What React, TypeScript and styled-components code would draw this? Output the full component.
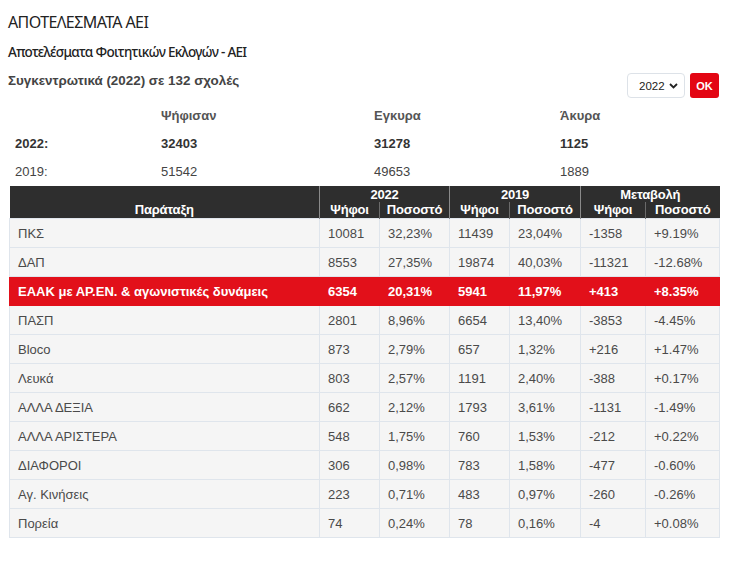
import React from "react";
import styled, { createGlobalStyle } from "styled-components";

const Global = createGlobalStyle`
  html, body { margin: 0; padding: 0; background: #fff; }
  body { font-family: "Liberation Sans", Arial, sans-serif; color: #333; }
`;

const Page = styled.div`
  width: 711px;
  padding: 12px 15px 20px 8px;
`;

const Title = styled.h1`
  margin: 0;
  font-family: "Noto Sans", "Open Sans", sans-serif;
  font-weight: 400;
  font-size: 16px;
  line-height: 20px;
  letter-spacing: -0.6px;
  color: #222;
`;

const SubTitle = styled.h2`
  margin: 10px 0 0;
  font-family: "Noto Sans", "Open Sans", sans-serif;
  font-weight: 500;
  font-size: 13.5px;
  line-height: 20px;
  letter-spacing: -0.7px;
  color: #222;
`;

const FilterRow = styled.div`
  display: flex;
  justify-content: space-between;
  align-items: flex-start;
  margin-top: 6px;
`;

const Summary = styled.h3`
  margin: 4px 0 0;
  font-family: "Liberation Sans", Arial, sans-serif;
  font-weight: 700;
  font-size: 13.4px;
  line-height: 18px;
  color: #444;
`;

const Form = styled.div`
  display: flex;
  gap: 5px;
  margin-top: 5px;
`;

const Select = styled.div`
  width: 58px;
  height: 25px;
  box-sizing: border-box;
  border: 1px solid #dde2e8;
  border-radius: 4px;
  display: flex;
  align-items: center;
  justify-content: space-between;
  padding: 0 6px 0 11px;
  font-size: 11.5px;
  color: #222;
  background: #fff;
`;

const OkButton = styled.button`
  width: 29px;
  height: 25px;
  border: none;
  border-radius: 3px;
  background: #e30613;
  color: #fff;
  font-family: "Liberation Sans", Arial, sans-serif;
  font-weight: 700;
  font-size: 11px;
  padding: 0;
`;

const Totals = styled.div`
  display: grid;
  grid-template-columns: 146px 213px 186px 1fr;
  grid-auto-rows: 28px;
  margin: 3px 0 0 7px;
  align-items: center;
  font-size: 13px;
`;

const TCell = styled.div<{ $bold?: boolean; $head?: boolean }>`
  font-weight: ${(p) => (p.$bold || p.$head ? 700 : 400)};
  color: ${(p) => (p.$head ? "#555" : p.$bold ? "#333" : "#444")};
`;

const Table = styled.table`
  margin: 1px 0 0 1px;
  width: 710px;
  border-collapse: collapse;
  table-layout: fixed;
  font-size: 13px;
`;

const Head = styled.thead`
  background: #2e2e2e;
  color: #fff;
`;

const Th = styled.th<{ $sep?: boolean; $minor?: boolean; $top?: boolean }>`
  font-weight: 700;
  font-size: 13px;
  line-height: 15px;
  text-align: center;
  padding: ${(p) => (p.$top ? "1px 0 0" : "0 0 1px")};
  vertical-align: bottom;
  border-left: ${(p) => (p.$sep ? "1px solid #8a8a8a" : p.$minor ? "1px solid #6a6a6a" : "none")};
  letter-spacing: -0.2px;
`;

const Row = styled.tr<{ $hl?: boolean }>`
  height: 29px;
  background: ${(p) => (p.$hl ? "#e2101a" : "#f5f5f5")};
  color: ${(p) => (p.$hl ? "#fff" : "#4a4a4a")};
  font-weight: ${(p) => (p.$hl ? 700 : 400)};
`;

const Td = styled.td<{ $hl?: boolean }>`
  padding: 0 8px;
  border: 1px solid ${(p) => (p.$hl ? "#e2101a" : "#dfe5ec")};
  border-top-color: #dfe5ec;
  white-space: nowrap;
  overflow: hidden;
`;

const Chevron = () => (
  <svg width="9" height="6" viewBox="0 0 9 6">
    <path d="M1 1l3.5 3.5L8 1" fill="none" stroke="#222" strokeWidth="1.8" />
  </svg>
);

const rows: [string, string, string, string, string, string, string, boolean?][] = [
  ["ΠΚΣ", "10081", "32,23%", "11439", "23,04%", "-1358", "+9.19%"],
  ["ΔΑΠ", "8553", "27,35%", "19874", "40,03%", "-11321", "-12.68%"],
  ["ΕΑΑΚ με ΑΡ.ΕΝ. & αγωνιστικές δυνάμεις", "6354", "20,31%", "5941", "11,97%", "+413", "+8.35%", true],
  ["ΠΑΣΠ", "2801", "8,96%", "6654", "13,40%", "-3853", "-4.45%"],
  ["Bloco", "873", "2,79%", "657", "1,32%", "+216", "+1.47%"],
  ["Λευκά", "803", "2,57%", "1191", "2,40%", "-388", "+0.17%"],
  ["ΑΛΛΑ ΔΕΞΙΑ", "662", "2,12%", "1793", "3,61%", "-1131", "-1.49%"],
  ["ΑΛΛΑ ΑΡΙΣΤΕΡΑ", "548", "1,75%", "760", "1,53%", "-212", "+0.22%"],
  ["ΔΙΑΦΟΡΟΙ", "306", "0,98%", "783", "1,58%", "-477", "-0.60%"],
  ["Αγ. Κινήσεις", "223", "0,71%", "483", "0,97%", "-260", "-0.26%"],
  ["Πορεία", "74", "0,24%", "78", "0,16%", "-4", "+0.08%"],
];

const widths = [310, 60, 70, 60, 71, 65, 74];

export default function App() {
  return (
    <>
      <Global />
      <Page>
        <Title>ΑΠΟΤΕΛΕΣΜΑΤΑ ΑΕΙ</Title>
        <SubTitle>Αποτελέσματα Φοιτητικών Εκλογών - ΑΕΙ</SubTitle>
        <FilterRow>
          <Summary>Συγκεντρωτικά (2022) σε 132 σχολές</Summary>
          <Form>
            <Select>
              <span>2022</span>
              <Chevron />
            </Select>
            <OkButton>OK</OkButton>
          </Form>
        </FilterRow>
        <Totals>
          <TCell />
          <TCell $head>Ψήφισαν</TCell>
          <TCell $head>Εγκυρα</TCell>
          <TCell $head>Άκυρα</TCell>
          <TCell $bold>2022:</TCell>
          <TCell $bold>32403</TCell>
          <TCell $bold>31278</TCell>
          <TCell $bold>1125</TCell>
          <TCell>2019:</TCell>
          <TCell>51542</TCell>
          <TCell>49653</TCell>
          <TCell>1889</TCell>
        </Totals>
        <Table>
          <colgroup>
            {widths.map((w, i) => (
              <col key={i} style={{ width: w }} />
            ))}
          </colgroup>
          <Head>
            <tr>
              <Th rowSpan={2}>Παράταξη</Th>
              <Th colSpan={2} $sep $top>2022</Th>
              <Th colSpan={2} $sep $top>2019</Th>
              <Th colSpan={2} $sep $top>Μεταβολή</Th>
            </tr>
            <tr>
              <Th $sep>Ψήφοι</Th>
              <Th $minor>Ποσοστό</Th>
              <Th $sep>Ψήφοι</Th>
              <Th $minor>Ποσοστό</Th>
              <Th $sep>Ψήφοι</Th>
              <Th $minor>Ποσοστό</Th>
            </tr>
          </Head>
          <tbody>
            {rows.map((r) => {
              const hl = !!r[7];
              return (
                <Row key={r[0]} $hl={hl}>
                  {r.slice(0, 7).map((c, i) => (
                    <Td key={i} $hl={hl}>
                      {c as string}
                    </Td>
                  ))}
                </Row>
              );
            })}
          </tbody>
        </Table>
      </Page>
    </>
  );
}
